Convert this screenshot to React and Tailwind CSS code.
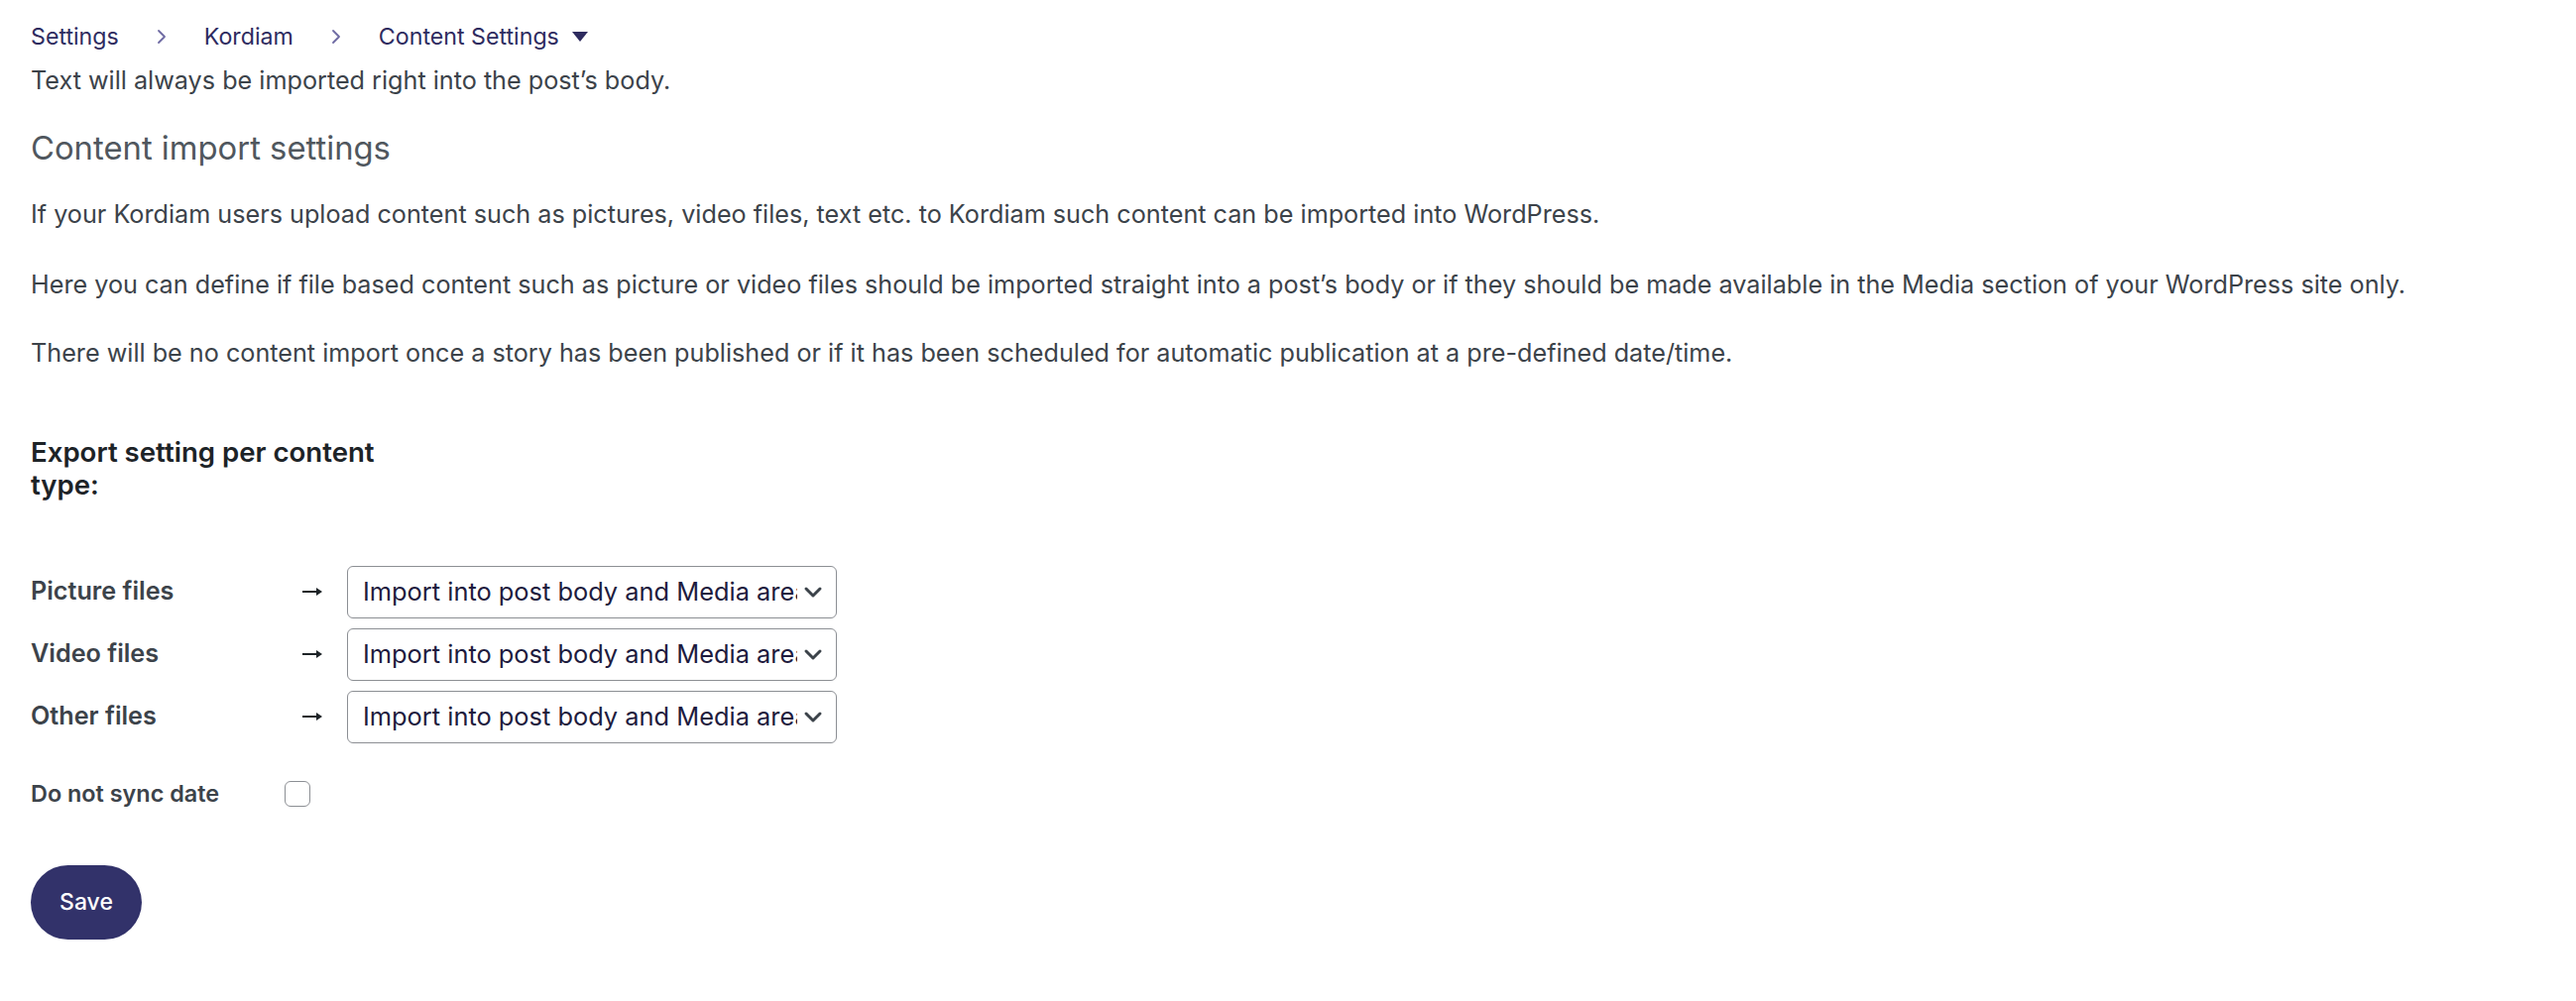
import React from "react";

function Chevron() {
  return (
    <svg width="12" height="20" viewBox="0 0 12 20" fill="none" className="shrink-0">
      <path d="M3 4 L9 10 L3 16" stroke="#6e6aa3" strokeWidth="1.8" strokeLinecap="round" strokeLinejoin="round" />
    </svg>
  );
}

function SelectBox() {
  return (
    <div className="flex h-[53px] w-[494px] items-center rounded-[6px] border border-[#8c8f94] bg-white pl-[15px] pr-[13px]">
      <span className="block w-[438px] overflow-hidden whitespace-nowrap text-[25.4px] leading-[38px] text-[#1e1b3e]">
        Import into post body and Media area
      </span>
      <svg width="20" height="13" viewBox="0 0 20 13" fill="none" className="ml-auto shrink-0">
        <path d="M3 3 L10 10 L17 3" stroke="#3c434a" strokeWidth="3" strokeLinecap="round" strokeLinejoin="round" />
      </svg>
    </div>
  );
}

function Row({ label }) {
  return (
    <div className="flex h-[53px] items-center">
      <div className="w-[273px] text-[25.2px] font-semibold text-[#3c434a]">{label}</div>
      <div className="w-[46px]">
        <svg width="22" height="12" viewBox="0 0 22 12" fill="none">
          <path d="M1 6 H17" stroke="#1d2327" strokeWidth="2" />
          <path d="M15 2 L21 6 L15 10 Z" fill="#1d2327" />
        </svg>
      </div>
      <SelectBox />
    </div>
  );
}

export default function App() {
  return (
    <div className="min-h-[1010px] w-[2598px] bg-white pl-[31px] pt-[21px]" style={{ fontFamily: "Inter, 'Noto Sans', sans-serif" }}>
      <nav className="flex h-[32px] items-center gap-[37px] text-[23.2px] text-[#2e2b5f]">
        <span>Settings</span>
        <Chevron />
        <span>Kordiam</span>
        <Chevron />
        <span className="flex items-center gap-[12px]">
          Content Settings
          <svg width="18" height="12" viewBox="0 0 18 12">
            <path d="M1 1 L17 1 L9 11 Z" fill="#2e2b5f" />
          </svg>
        </span>
      </nav>

      <p className="mt-[9px] text-[25.2px] leading-[38.4px] text-[#3c434a]">
        Text will always be imported right into the post’s body.
      </p>

      <h2 className="mt-[29px] text-[32.8px] leading-[40px] font-normal text-[#50575e]">Content import settings</h2>

      <p className="mt-[28px] text-[25.2px] leading-[38.4px] text-[#3c434a]">
        If your Kordiam users upload content such as pictures, video files, text etc. to Kordiam such content can be imported into WordPress.
      </p>
      <p className="mt-[32px] text-[25.2px] leading-[38.4px] text-[#3c434a]">
        Here you can define if file based content such as picture or video files should be imported straight into a post’s body or if they should be made available in the Media section of your WordPress site only.
      </p>
      <p className="mt-[31px] text-[25.2px] leading-[38.4px] text-[#3c434a]">
        There will be no content import once a story has been published or if it has been scheduled for automatic publication at a pre-defined date/time.
      </p>

      <h3 className="mt-[64px] w-[380px] text-[27.6px] leading-[33px] font-semibold text-[#1d2327]">
        Export setting per content type:
      </h3>

      <div className="mt-[65px] flex flex-col gap-[10px]">
        <Row label="Picture files" />
        <Row label="Video files" />
        <Row label="Other files" />
      </div>

      <div className="mt-[38px] flex h-[26px] items-center">
        <div className="w-[256px] text-[23.4px] font-semibold text-[#3c434a]">Do not sync date</div>
        <div className="h-[26px] w-[26px] rounded-[6px] border border-[#8c8f94] bg-white" />
      </div>

      <button className="mt-[59px] flex h-[75px] w-[112px] items-center justify-center rounded-full bg-[#32326a] text-[23px] font-medium text-white">
        Save
      </button>
    </div>
  );
}
